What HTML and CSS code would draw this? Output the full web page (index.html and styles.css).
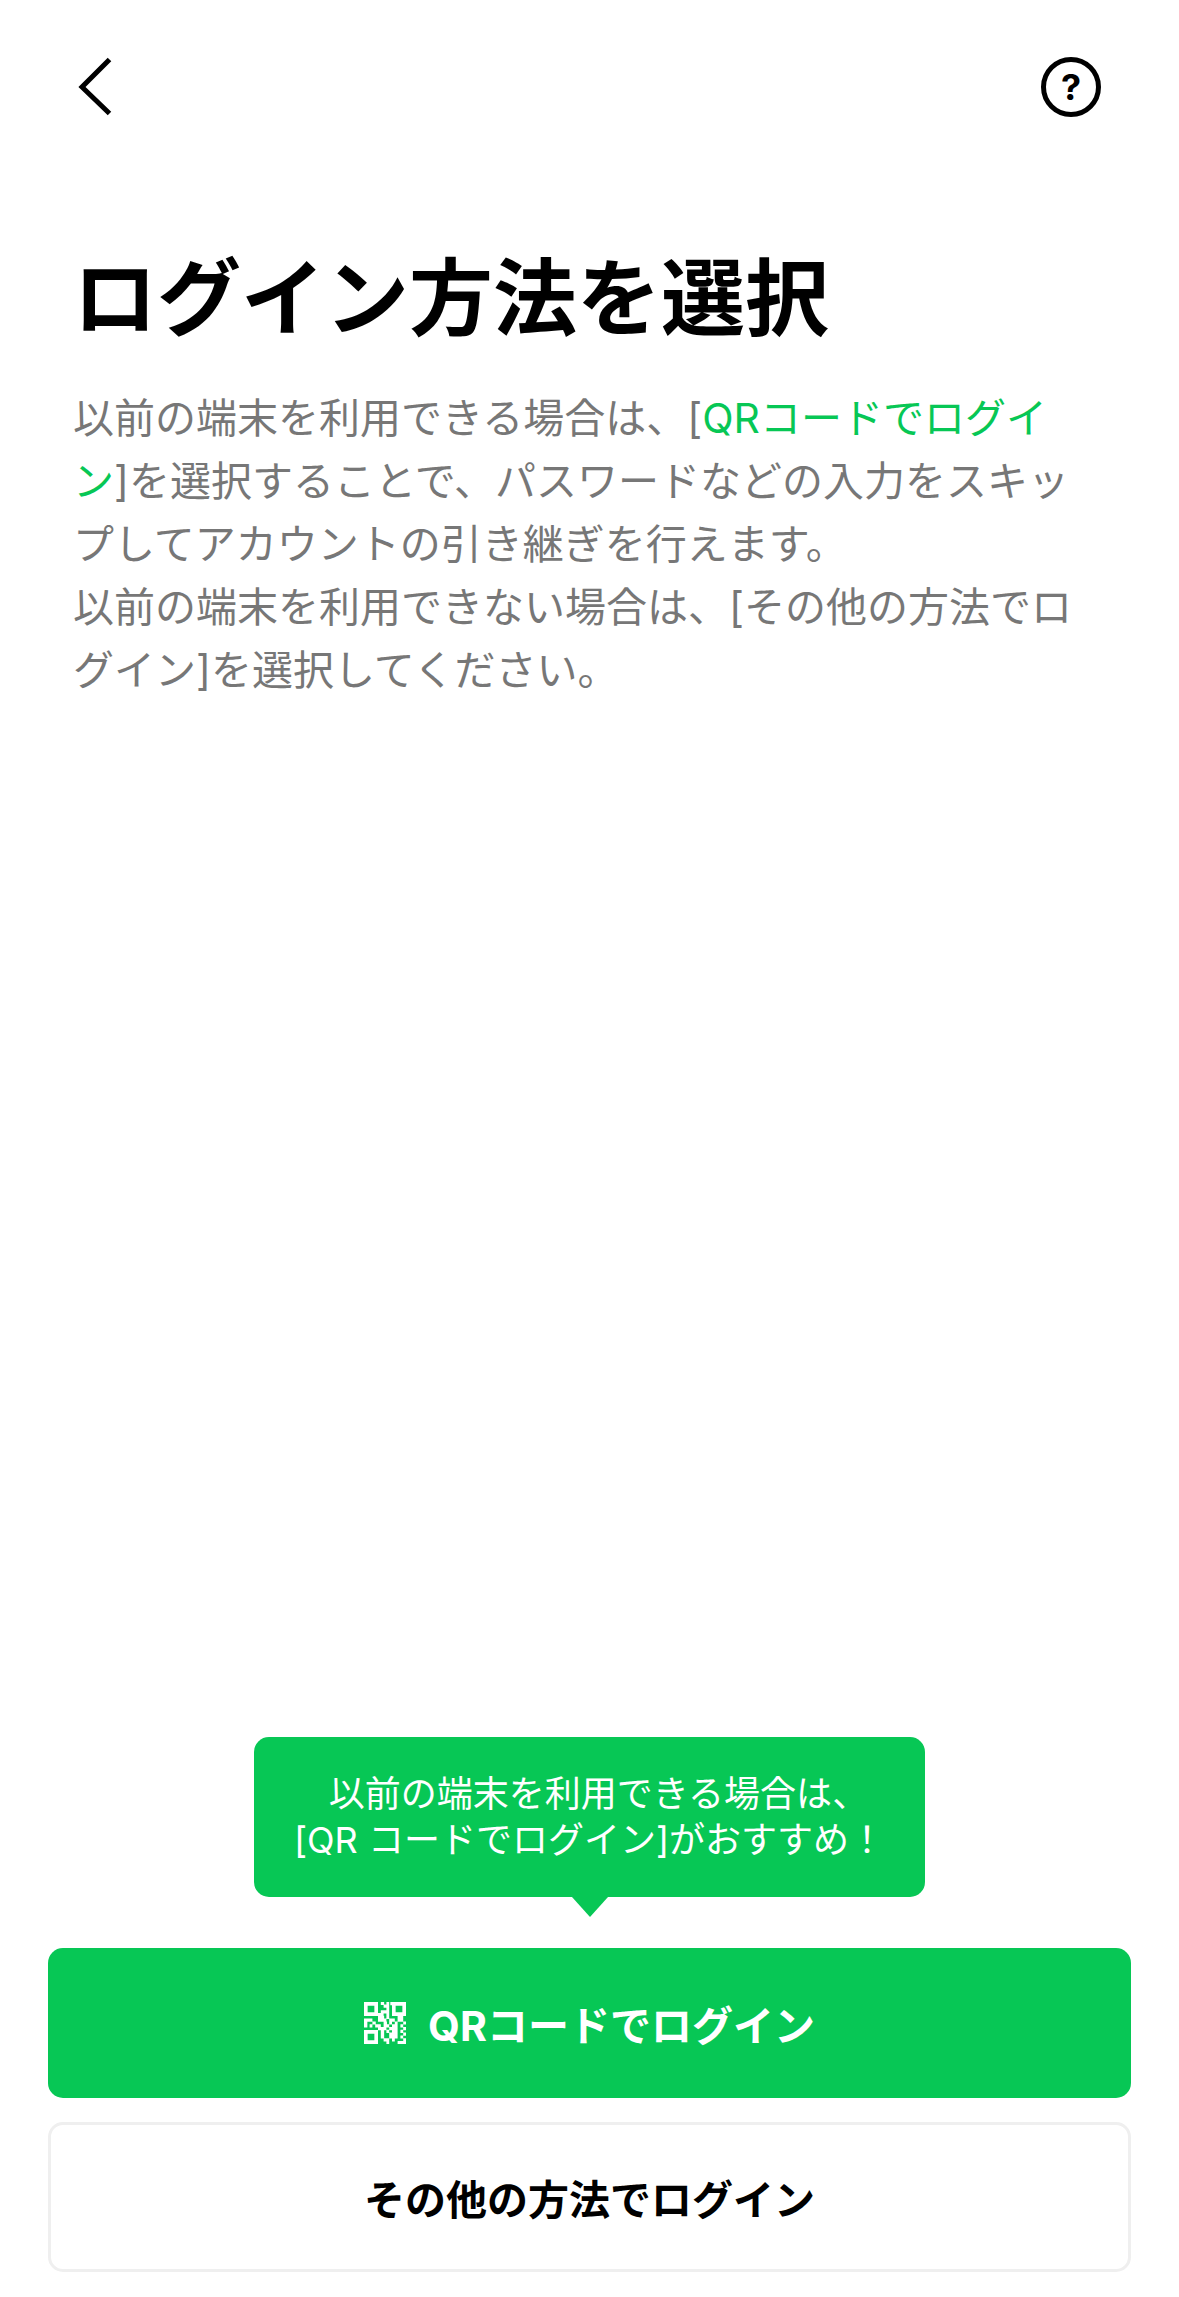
FILE: index.html
```
<!DOCTYPE html>
<html lang="ja">
<head>
  <meta charset="UTF-8">
  <meta name="viewport" content="width=device-width, initial-scale=1">
  <title>ログイン方法を選択</title>
  <link rel="stylesheet" href="styles.css">
</head>
<body>
  <header class="header">
    <button class="back" type="button" aria-label="戻る">
      <svg width="36" height="60" viewBox="0 0 36 60" fill="none" stroke="#000" stroke-width="5">
        <path d="M31.5 2.5 L4 30 L31.5 56.5"/>
      </svg>
    </button>
    <button class="help" type="button" aria-label="ヘルプ">?</button>
  </header>

  <main class="content">
    <h1 class="title">ログイン方法を選択</h1>
    <p class="description">以前の端末を利用できる場合は、[<a href="#qr">QRコードでログイン</a>]を選択することで、パスワードなどの入力をスキップしてアカウントの引き継ぎを行えます。<br>以前の端末を利用できない場合は、[その他の方法でログイン]を選択してください。</p>
  </main>

  <footer class="actions">
    <div class="tooltip">以前の端末を利用できる場合は<span class="half">、</span><br>[QR コードでログイン]がおすすめ！</div>
    <button class="btn btn-primary" id="qr" type="button">
      <svg class="qr-icon" width="42" height="42" viewBox="0 0 15 15" fill="none" stroke="#fff">
        <path stroke-width="1.3" d="M.65 .65h3.7v3.7h-3.7z M10.65 .65h3.7v3.7h-3.7z M.65 10.65h3.7v3.7h-3.7z"/>
        <path stroke-width="1.15" d="M6 .5h1.2 M8 .5h1 M9.4 .6h1.4 M7 1.5h2 M8 2.5h1 M6 3.5h3 M5 4.5h2 M8 4.5h1 M5 5.5h2.2 M8 5.5h1 M12 5.5h2 M0 6.5h3 M5 6.5h3 M9 6.5h2 M12 6.5h2 M0 7.5h1.2 M3 7.5h1.2 M4 8.5h2 M7 7.5h1.2 M9 7.5h1 M11 7.5h1 M14 7.5h1 M0 8.5h1.2 M2 8.5h1 M7 8.5h1 M8 8.5h1 M10 8.5h2 M13 8.5h1 M5 9.5h3 M9 9.5h3 M14 9.5h1 M6 10.5h1.2 M8 10.5h1 M10 10.5h2 M13 10.5h1 M6 11.5h1.2 M9 11.5h3 M14 11.5h1 M6 12.5h1.2 M9 12.5h3 M13 12.5h1 M7 13.5h2 M10 13.5h1 M14 13.5h1 M8 14.5h1 M12 14.5h3"/>
      </svg>
      QRコードでログイン
    </button>
    <button class="btn btn-secondary" type="button">その他の方法でログイン</button>
  </footer>
</body>
</html>
```
FILE: styles.css
```
* {
  box-sizing: border-box;
}
body {
  margin: 0;
  min-height: 100vh;
  display: flex;
  flex-direction: column;
  background: #fff;
  color: #000;
  font-family: Inter, 'Noto Sans CJK JP', sans-serif;
}
button {
  font-family: inherit;
  cursor: pointer;
}
.header {
  display: flex;
  justify-content: space-between;
  align-items: center;
  padding: 57px 78px 0;
}
.back {
  display: flex;
  padding: 0;
  border: none;
  background: none;
}
.help {
  width: 60px;
  height: 60px;
  padding: 0;
  border: 5px solid #000;
  border-radius: 50%;
  background: none;
  color: #000;
  font-size: 36px;
  font-weight: 700;
  line-height: 50px;
}
.content {
  flex: 1;
  padding: 126px 84px 0 73px;
}
.title {
  margin: 0 0 32px;
  font-size: 84px;
  font-weight: 700;
  line-height: 112px;
}
.description {
  margin: 0;
  color: #777;
  font-size: 41px;
  line-height: 63px;
}
.description a {
  color: #07c755;
  text-decoration: none;
}
.actions {
  display: flex;
  flex-direction: column;
  padding: 0 48px 25px;
}
.tooltip {
  position: relative;
  align-self: center;
  margin-bottom: 51px;
  padding: 34px 40px;
  border-radius: 15px;
  background: #07c755;
  color: #fff;
  font-size: 36px;
  line-height: 46px;
  text-align: center;
}
.tooltip::after {
  content: '';
  position: absolute;
  top: 100%;
  left: 50%;
  margin-left: -18px;
  border: 18px solid transparent;
  border-top: 20px solid #07c755;
  border-bottom: 0;
}
.half {
  font-feature-settings: 'halt';
}
.btn {
  display: flex;
  justify-content: center;
  align-items: center;
  gap: 22px;
  height: 150px;
  border-radius: 15px;
  font-size: 41px;
  font-weight: 700;
}
.btn-primary {
  margin-bottom: 24px;
  border: none;
  background: #07c755;
  color: #fff;
}
.btn-secondary {
  border: 3px solid #efefef;
  background: #fff;
  color: #000;
}
```
